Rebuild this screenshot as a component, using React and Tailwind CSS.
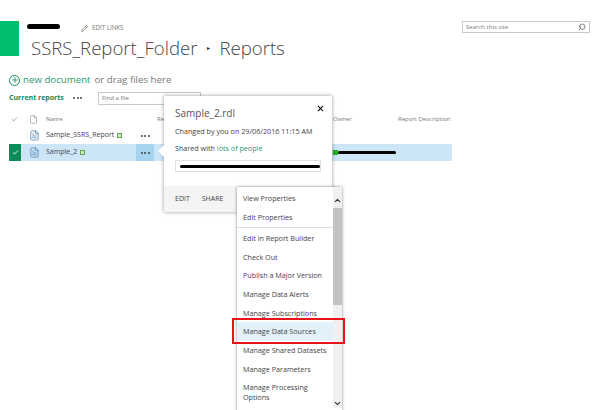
import { Check, File, FileText, Pencil, Plus, Search, X, ChevronUp, ChevronDown } from 'lucide-react'

const menuItems = [
  ['View Properties', 'Edit Properties'],
  ['Edit in Report Builder', 'Check Out', 'Publish a Major Version', 'Manage Data Alerts', 'Manage Subscriptions', 'Manage Data Sources', 'Manage Shared Datasets', 'Manage Parameters'],
]

function Blob({ className }) {
  return <div className={`bg-black rounded-full ${className}`}></div>
}

function Dots() {
  return (
    <div className="flex gap-[1.5px]">
      <span className="w-[2px] h-[2px] rounded-full bg-[#444]"></span>
      <span className="w-[2px] h-[2px] rounded-full bg-[#444]"></span>
      <span className="w-[2px] h-[2px] rounded-full bg-[#444]"></span>
    </div>
  )
}

function Row({ name, selected }) {
  return (
    <div className="flex items-center h-[17px]">
      <div className={`w-3 h-[17px] flex items-center justify-center ${selected ? 'bg-[#0b8a5a]' : ''}`}>
        {selected && <Check size={7} color="white" strokeWidth={3} />}
      </div>
      <div className={`flex items-center h-[17px] w-[431px] ${selected ? 'bg-[#cde6f7]' : ''}`}>
        <div className="w-[25px] pl-[8px]">
          <FileText size={11} color="#3f74a8" strokeWidth={1.5} />
        </div>
        <div className="w-[90px] flex items-center text-[7px] text-[#444]">
          <span>{name}</span>
          <span className="ml-[3px] w-[5px] h-[5px] border border-[#5da84a] bg-[#cfe8c4]"></span>
        </div>
        <div className={`w-[18px] h-[17px] flex items-center justify-center ${selected ? 'bg-[#a6d3f0]' : ''}`}>
          <Dots />
        </div>
        {selected && (
          <div className="ml-[179px] flex items-center">
            <span className="w-[5px] h-[5px] bg-[#22b022]"></span>
            <Blob className="w-[58px] h-[2.5px]" />
          </div>
        )}
      </div>
    </div>
  )
}

export default function App() {
  return (
    <div className="relative w-[598px] h-[410px] overflow-hidden bg-white font-['Open_Sans',sans-serif]">
      <div className="flex pt-[21px] h-[56px]">
        <div className="w-[19px] h-[35px] bg-[#00c06f]"></div>
        <div className="ml-3 w-[400px]">
          <div className="flex items-center h-[14px]">
            <Blob className="ml-[-4px] w-[33px] h-[5px] -mt-1" />
            <Pencil size={7} color="#555" className="ml-[21px]" />
            <span className="ml-[4px] text-[6.2px] text-[#777]">EDIT LINKS</span>
          </div>
          <div className="flex items-center h-[26px] text-[18.6px] leading-none font-light text-[#444]">
            <span>SSRS_Report_Folder</span>
            <span className="w-[22px] text-center text-[6px] text-[#222]">▸</span>
            <span>Reports</span>
          </div>
        </div>
        <div className="ml-[31px] h-3 w-[128px] border border-[#c8c8c8] flex items-center justify-between px-[3px]">
          <span className="text-[6px] text-[#777]">Search this site</span>
          <Search size={8} color="#444" className="-scale-x-100" />
        </div>
      </div>

      <div className="flex items-center pl-[9px] mt-[16px] h-4 text-[9.7px]">
        <span className="w-[11px] h-[11px] rounded-full border border-[#0b8a5a] flex items-center justify-center">
          <Plus size={8} color="#0b8a5a" strokeWidth={2.5} />
        </span>
        <span className="ml-[3px] text-[#2c9a6c]">new document</span>
        <span className="ml-1 text-[#777]">or drag files here</span>
      </div>

      <div className="flex items-center pl-[9px] mt-[3px] h-[14px]">
        <span className="text-[7px] font-bold text-[#0b8a5a] w-[64px]">Current reports</span>
        <Dots />
        <div className="ml-[16px] w-[103px] h-[13px] border border-[#c8c8c8] flex items-center px-[3px]">
          <span className="text-[6px] text-[#777]">Find a file</span>
        </div>
      </div>

      <div className="flex items-center h-[13px] mt-[8px] pl-[11px] text-[6px] text-[#777]">
        <Check size={7} color="#666" strokeWidth={2} />
        <File size={9} color="#666" strokeWidth={1.2} className="ml-[11px]" />
        <span className="ml-[8px] w-[111px]">Name</span>
        <span className="w-[176px]">Re</span>
        <span className="w-[65px]">Owner</span>
        <span>Report Description</span>
      </div>

      <div className="pl-[9px] mt-[1px]">
        <Row name="Sample_SSRS_Report" />
        <Row name="Sample_2" selected />
      </div>

      {/* callout */}
      <div className="absolute left-[164px] top-[96px] w-[168px] h-[116px] bg-white shadow-[0_0_4px_rgba(0,0,0,0.4)] flex flex-col">
        <div className="absolute -left-[6px] top-[49px] w-0 h-0 border-y-[6px] border-y-transparent border-r-[6px] border-r-white"></div>
        <X size={9} color="#222" strokeWidth={3} className="absolute right-[7px] top-[8px]" />
        <div className="px-[11px] pt-[9px] flex-1">
          <div className="text-[10px] text-[#555] leading-[16px]">Sample_2.rdl</div>
          <div className="text-[7.2px] text-[#444] mt-[5px] leading-[11px] whitespace-nowrap">Changed by you on 29/06/2016 11:15 AM</div>
          <div className="text-[7.2px] text-[#444] mt-[6px] leading-[11px]">Shared with <span className="text-[#2c9a6c]">lots of people</span></div>
          <div className="relative mt-[6px] h-[12px] w-[146px] border border-[#e0e0e0]">
            <Blob className="absolute left-[4px] top-[4px] w-[140px] h-[2.5px]" />
          </div>
        </div>
        <div className="h-[26px] bg-[#f4f4f4] flex items-center gap-[12px] px-[11px] text-[7px] text-[#444]">
          <span>EDIT</span>
          <span>SHARE</span>
        </div>
      </div>

      {/* menu */}
      <div className="absolute left-[237px] top-[187px] w-[105px] h-[230px] bg-white shadow-[0_0_3px_rgba(0,0,0,0.45)] flex">
        <div className="flex-1 text-[7.2px] text-[#444]">
          <div className="pt-[2px] pb-[0.5px] border-b border-[#ddd]">
            {menuItems[0].map((t) => (
              <div key={t} className="h-[18.7px] flex items-center pl-[6px]">{t}</div>
            ))}
          </div>
          <div className="pt-[1px]">
            {menuItems[1].map((t) => (
              <div key={t} className={`h-[18.7px] flex items-center pl-[6px] ${t === 'Manage Data Sources' ? 'bg-[#e3f1fa]' : ''}`}>{t}</div>
            ))}
            <div className="pl-[6px] pt-[3.5px] leading-[10px] w-[80px]">Manage Processing Options</div>
          </div>
        </div>
        <div className="w-[9px] h-[221px] bg-[#f0f0f0] flex flex-col items-center">
          <ChevronUp size={9} color="#333" strokeWidth={3} className="mt-[9px] mb-[3px]" />
          <div className="w-full h-[97px] bg-[#c4c4c4]"></div>
          <div className="flex-1"></div>
          <ChevronDown size={9} color="#333" strokeWidth={3} />
        </div>
      </div>

      {/* red highlight */}
      <div className="absolute left-[232px] top-[318px] w-[113px] h-[26px] border-2 border-[#e8141c]"></div>
    </div>
  )
}
